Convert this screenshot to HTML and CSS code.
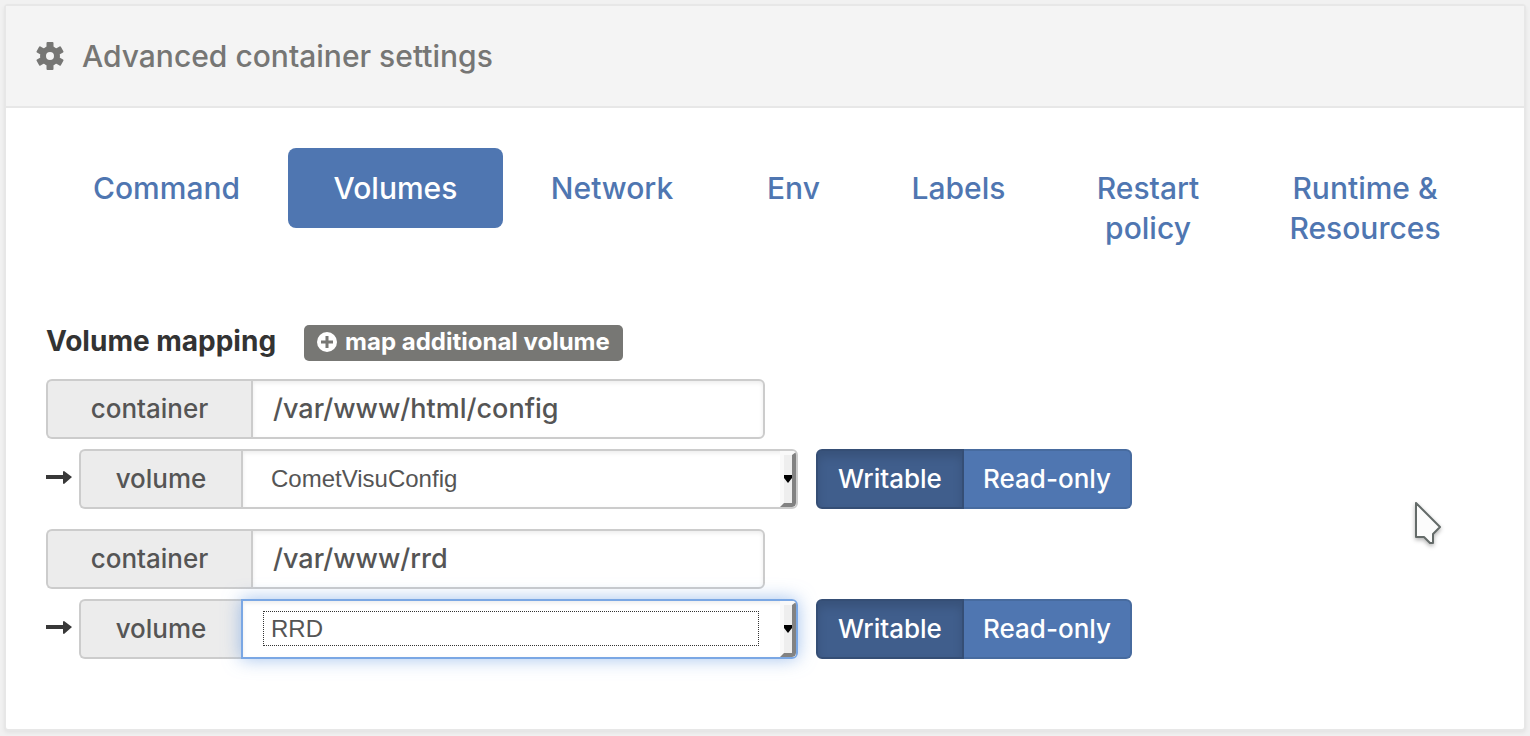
FILE: index.html
```html
<!DOCTYPE html>
<html lang="en">
<head>
<meta charset="utf-8">
<title>Advanced container settings</title>
<link rel="stylesheet" href="styles.css">
</head>
<body>
<main class="panel">
  <header class="panel-header">
    <svg class="cog" viewBox="0 0 28 28" aria-hidden="true"><circle class="cog-ring" cx="14" cy="14" r="7"/><path d="M10.5 1q0-1 1-1h5q1 0 1 1v5h-7zM10.5 22h7v5q0 1-1 1h-5q-1 0-1-1z"/><path d="M10.5 1q0-1 1-1h5q1 0 1 1v5h-7zM10.5 22h7v5q0 1-1 1h-5q-1 0-1-1z" transform="rotate(60 14 14)"/><path d="M10.5 1q0-1 1-1h5q1 0 1 1v5h-7zM10.5 22h7v5q0 1-1 1h-5q-1 0-1-1z" transform="rotate(120 14 14)"/></svg>
    <h1 class="panel-title">Advanced container settings</h1>
  </header>
  <div class="panel-body">
    <nav class="tabs">
      <a class="tab" href="#command">Command</a>
      <a class="tab tab-active" href="#volumes" aria-current="page">Volumes</a>
      <a class="tab" href="#network">Network</a>
      <a class="tab" href="#env">Env</a>
      <a class="tab" href="#labels">Labels</a>
      <a class="tab" href="#restart">Restart<br>policy</a>
      <a class="tab" href="#runtime">Runtime &amp;<br>Resources</a>
    </nav>

    <section class="volumes">
      <div class="section-head">
        <h2 class="section-title">Volume mapping</h2>
        <button class="add-button" type="button">
          <svg class="plus" viewBox="0 0 20 20" aria-hidden="true"><circle cx="10" cy="10" r="10"/><path d="M10 4v12M4 10h12"/></svg>
          map additional volume
        </button>
      </div>

      <div class="mapping">
        <div class="group">
          <label class="addon addon-wide" for="path1">container</label>
          <input class="field" id="path1" type="text" value="/var/www/html/config">
        </div>
        <div class="target">
          <svg class="arrow" viewBox="0 0 26 16" aria-hidden="true"><path d="M0 4h17V1q0-1 1-1l8 6-8 7q-1 0-1-1V8H0z"/></svg>
          <div class="group">
            <label class="addon" for="volume1">volume</label>
            <div class="select-box">
              <select class="field select" id="volume1"><option>CometVisuConfig</option><option>RRD</option></select>
              <svg class="bevel" viewBox="0 0 16 56" aria-hidden="true"><path class="bevel-light" d="M0 0h16v56H0z"/><path class="bevel-face" d="M4 4h8v48H4z"/><path class="bevel-dark" d="M16 1v51q0 4-4 4H0l4-4h8V4z"/><path class="bevel-mark" d="M4 24h8v3l-4 5-4-5z"/></svg>
            </div>
          </div>
          <div class="modes">
            <button class="mode mode-on" type="button" aria-pressed="true">Writable</button>
            <button class="mode" type="button" aria-pressed="false">Read-only</button>
          </div>
        </div>
      </div>

      <div class="mapping">
        <div class="group">
          <label class="addon addon-wide" for="path2">container</label>
          <input class="field" id="path2" type="text" value="/var/www/rrd">
        </div>
        <div class="target">
          <svg class="arrow" viewBox="0 0 26 16" aria-hidden="true"><path d="M0 4h17V1q0-1 1-1l8 6-8 7q-1 0-1-1V8H0z"/></svg>
          <div class="group">
            <label class="addon" for="volume2">volume</label>
            <div class="select-box select-box-focus">
              <select class="field select" id="volume2"><option>RRD</option><option>CometVisuConfig</option></select>
              <svg class="bevel" viewBox="0 0 16 56" aria-hidden="true"><path class="bevel-light" d="M0 0h16v56H0z"/><path class="bevel-face" d="M4 4h8v48H4z"/><path class="bevel-dark" d="M16 1v51q0 4-4 4H0l4-4h8V4z"/><path class="bevel-mark" d="M4 24h8v3l-4 5-4-5z"/></svg>
            </div>
          </div>
          <div class="modes">
            <button class="mode mode-on" type="button" aria-pressed="true">Writable</button>
            <button class="mode" type="button" aria-pressed="false">Read-only</button>
          </div>
        </div>
      </div>
    </section>
  </div>
</main>
<svg class="pointer" viewBox="0 0 28 44" aria-hidden="true"><path d="M2 2v34h8l6 6h3v-9l7-7z"/></svg>
</body>
</html>
```
FILE: styles.css
```css
* { box-sizing: border-box; }

body {
  margin: 0;
  padding: 4px 4px 5px;
  background: #f1f1f1;
  color: #333;
  font-family: Inter, "Liberation Sans", sans-serif;
  font-size: 26px;
}

.panel {
  background: #fff;
  border: 2px solid #e7e7e7;
  border-radius: 4px;
  box-shadow: 0 2px 4px rgba(0, 0, 0, 0.06);
}

.panel-header {
  display: flex;
  align-items: center;
  gap: 18px;
  height: 102px;
  padding: 0 30px;
  background: #f4f4f4;
  border-bottom: 2px solid #e7e7e7;
}

.cog { width: 28px; height: 28px; fill: #767674; }
.cog-ring { fill: none; stroke: #767674; stroke-width: 6; }

.panel-title {
  margin: 0;
  color: #767674;
  font-size: 30px;
  font-weight: 500;
  line-height: 40px;
}

.panel-body { padding: 40px 40px 70px; }

.tabs {
  display: grid;
  grid-template-columns: 241fr 215fr 216fr 145fr 183fr 194fr 238fr;
  column-gap: 1px;
  align-items: start;
}

.tab {
  padding: 20px 0;
  border-radius: 8px;
  color: #4f76b1;
  font-size: 30px;
  font-weight: 500;
  line-height: 40px;
  text-align: center;
  text-decoration: none;
}

.tab-active { background: #4f76b1; color: #fff; }

.volumes { padding-top: 56px; }

.section-head {
  display: flex;
  align-items: flex-start;
  gap: 28px;
  padding-top: 1px;
  margin-bottom: 18px;
}

.section-title {
  margin: 0;
  font-size: 28px;
  font-weight: 700;
  line-height: 32px;
}

.add-button {
  display: flex;
  align-items: center;
  gap: 8px;
  height: 36px;
  padding: 0 13px 3px;
  border: 0;
  border-radius: 5px;
  background: #777774;
  color: #fff;
  font-family: inherit;
  font-size: 24px;
  font-weight: 700;
}

.plus { width: 20px; height: 20px; fill: #fff; stroke: #777774; stroke-width: 3; }
.plus circle { stroke: none; }

.mapping { margin-bottom: 20px; }
.mapping:last-child { margin-bottom: 0; }

.group { display: flex; width: 50%; height: 60px; }

.target { display: flex; align-items: center; margin-top: 10px; }

.arrow { width: 26px; height: 16px; margin-right: 7px; fill: #383838; }

.addon {
  display: flex;
  align-items: center;
  justify-content: center;
  width: 162px;
  padding-bottom: 2px;
  border: 2px solid #ccc;
  border-right: 0;
  border-radius: 6px 0 0 6px;
  background: #ececec;
  color: #555;
  font-weight: 500;
}

.addon-wide { width: 205px; }

.field {
  flex: 1;
  min-width: 0;
  height: 60px;
  padding: 0 20px 2px;
  border: 2px solid #ccc;
  border-radius: 0 6px 6px 0;
  outline: 0;
  background: #fff;
  box-shadow: inset 0 2px 4px rgba(0, 0, 0, 0.08);
  color: #555;
  font-family: inherit;
  font-size: 27px;
  font-weight: 500;
}

.select-box { position: relative; flex: 1; border-radius: 0 6px 6px 0; }

.select {
  width: 100%;
  padding: 0 28px 2px;
  appearance: none;
  font-family: "Liberation Sans", Arial, sans-serif;
  font-size: 24px;
  font-weight: 400;
}

.select-box-focus { box-shadow: 0 0 18px rgba(102, 153, 225, 0.6); }
.select-box-focus .select { border-color: #7aa7e4; }

.select-box-focus::after {
  content: "";
  position: absolute;
  inset: 12px 39px 13px 22px;
  border: 1px dotted #333;
  pointer-events: none;
}

.bevel {
  position: absolute;
  top: 2px;
  right: 2px;
  width: 16px;
  height: 56px;
  border-radius: 0 4px 4px 0;
  pointer-events: none;
}

.bevel-light { fill: #f9f9f9; }
.bevel-face { fill: #eee; }
.bevel-dark { fill: #828282; }
.bevel-mark { fill: #000; }

.modes { display: flex; margin-left: 18px; }

.mode {
  width: 168px;
  height: 60px;
  padding: 0 0 2px;
  border: 2px solid #476b9f;
  border-left: 0;
  border-radius: 0 6px 6px 0;
  background: #4f76b1;
  color: #fff;
  font-family: inherit;
  font-size: 26px;
  font-weight: 500;
}

.mode-on {
  width: 148px;
  border: 2px solid #354e75;
  border-radius: 6px 0 0 6px;
  background: #405e8c;
  box-shadow: inset 0 6px 10px rgba(0, 0, 0, 0.13);
}

.pointer {
  position: absolute;
  top: 501px;
  left: 1414px;
  width: 28px;
  height: 44px;
  fill: #fcfcfc;
  stroke: #646b69;
  stroke-width: 2;
  stroke-linejoin: round;
  filter: drop-shadow(0 2px 2px rgba(0, 0, 0, 0.3));
  pointer-events: none;
}
```
